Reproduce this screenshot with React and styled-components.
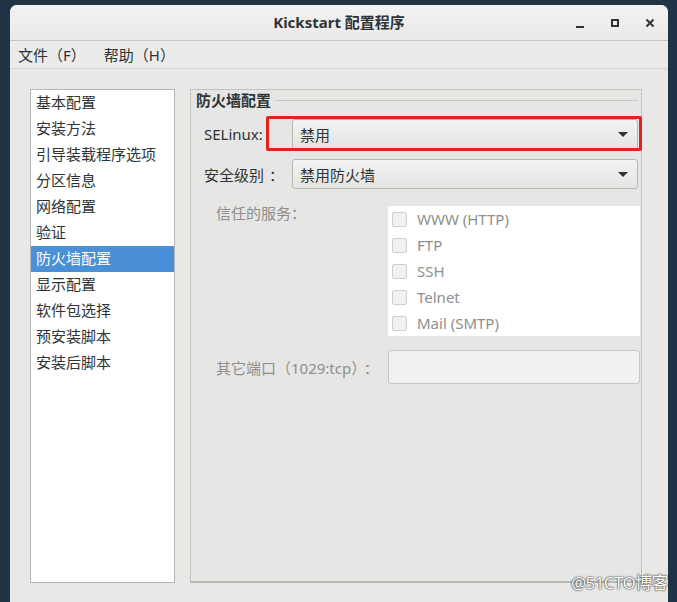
import React from 'react';
import styled, { createGlobalStyle } from 'styled-components';

const Global = createGlobalStyle`
html, body {
  margin: 0;
  padding: 0;
  background: #1f3547;
}
body {
  font-family: "Noto Sans", "Noto Sans CJK SC", sans-serif;
  font-size: 15px;
  color: #2e3436;
}
`

const Desk = styled.div`
width: 677px;
height: 602px;
padding: 5px 9px 0 10px;
box-sizing: border-box;
position: relative;
overflow: hidden;
`

const Window = styled.div`
display: flex;
flex-direction: column;
height: 597px;
background: #e8e8e7;
border-radius: 7px 7px 0 0;
overflow: hidden;
`

const TitleBar = styled.div`
display: grid;
grid-template-columns: 1fr auto 1fr;
align-items: center;
height: 35px;
flex-shrink: 0;
background: linear-gradient(#f3f2f1, #eceae9);
border-bottom: 1px solid #c4c3c1;
`

const Title = styled.div`
font-weight: bold;
font-size: 15px;
color: #2e3436;
margin-top: -3px;
`

const Controls = styled.div`
display: flex;
align-items: center;
justify-content: flex-end;
gap: 13px;
padding-right: 7px;
`

const Ctrl = styled.div`
width: 22px;
height: 22px;
display: flex;
align-items: center;
justify-content: center;
`

const MenuBar = styled.div`
display: flex;
height: 27px;
flex-shrink: 0;
align-items: center;
padding-left: 8px;
gap: 18px;
background: #ebebea;
border-bottom: 1px solid #d6d6d4;
`

const MenuItem = styled.span`
font-size: 15px;
color: #2e3436;
`

const Body = styled.div`
display: flex;
gap: 15px;
padding: 20px 26px 19px 20px;
flex: 1;
`

const Sidebar = styled.div`
width: 143px;
background: #fff;
border: 1px solid #b8b8b6;
`

const NavItem = styled.div`
height: 26px;
line-height: 25px;
padding-left: 5px;
font-size: 15px;
background: ${p => p.active ? '#4a90d9' : 'transparent'};
color: ${p => p.active ? '#fff' : '#2e3436'};
`

const Panel = styled.div`
flex: 1;
border: 1px solid #c2c2bf;
border-bottom: 2px solid #b8b8b4;
background: #e6e6e5;
position: relative;
padding: 0 1px 0 13px;
`

const Legend = styled.div`
display: flex;
align-items: center;
height: 20px;
margin-left: -8px;
margin-right: 2px;
gap: 4px;
`

const LegendText = styled.span`
font-weight: bold;
font-size: 15px;
color: #2e3436;
margin-top: -2px;
`

const LegendLine = styled.div`
flex: 1;
height: 1px;
background: #c8c8c5;
`

const Row = styled.div`
display: flex;
align-items: ${p => p.top ? 'flex-start' : 'center'};
margin-top: ${p => p.gap}px;
padding-left: ${p => p.indent || 0}px;
`

const Label = styled.div`
width: ${p => p.w}px;
flex-shrink: 0;
font-size: 15px;
color: ${p => p.dim ? '#8e8f8d' : '#2e3436'};
line-height: ${p => p.top ? '14px' : 'normal'};
`

const Colon = styled.span`
margin-left: 5px;
`

const Combo = styled.div`
flex: 1;
height: 28px;
margin-right: 2px;
display: flex;
align-items: center;
justify-content: space-between;
padding: 0 9px 0 7px;
border: 1px solid #b6b6b3;
border-radius: 3px;
background: linear-gradient(#f4f4f3, #e3e3e1);
font-size: 15px;
color: #2e3436;
`

const Arrow = styled.div`
width: 0;
height: 0;
border-left: 5px solid transparent;
border-right: 5px solid transparent;
border-top: 5px solid #2e3436;
`

const List = styled.div`
flex: 1;
margin-right: 0;
background: #fff;
`

const Check = styled.div`
display: flex;
align-items: center;
height: 26px;
padding-left: 4px;
gap: 10px;
font-size: 15px;
color: #8e8f8d;
`

const Box = styled.div`
width: 13px;
height: 13px;
border: 1px solid #cfcfcd;
border-radius: 2px;
background: #f1f1f0;
`

const Entry = styled.div`
flex: 1;
height: 32px;
border: 1px solid #c6c6c4;
border-radius: 3px;
background: #f1f1f0;
`

const Highlight = styled.div`
position: absolute;
left: 75px;
top: 26px;
width: 370px;
height: 29px;
border: 3px solid #e0231d;
border-radius: 2px;
`

const Watermark = styled.div`
position: absolute;
right: 9px;
bottom: 8px;
font-size: 17px;
color: #fff;
letter-spacing: -0.6px;
text-shadow: 0 0 2px #333, 0 0 1px #111;
`

const nav = ['基本配置', '安装方法', '引导装载程序选项', '分区信息', '网络配置', '验证',
  '防火墙配置', '显示配置', '软件包选择', '预安装脚本', '安装后脚本']

const services = ['WWW (HTTP)', 'FTP', 'SSH', 'Telnet', 'Mail (SMTP)']

const App = () => {
  return (
    <Desk>
      <Global />
      <Window>
        <TitleBar>
          <div />
          <Title>Kickstart 配置程序</Title>
          <Controls>
            <Ctrl>
              <svg width="12" height="12" viewBox="0 0 12 12"><rect x="2" y="9" width="8" height="2" fill="#2e3436" /></svg>
            </Ctrl>
            <Ctrl>
              <svg width="12" height="12" viewBox="0 0 12 12"><rect x="3" y="3" width="6" height="6" fill="none" stroke="#2e3436" strokeWidth="2" /></svg>
            </Ctrl>
            <Ctrl>
              <svg width="12" height="12" viewBox="0 0 12 12"><path d="M2.5 2.5 L9.5 9.5 M9.5 2.5 L2.5 9.5" stroke="#2e3436" strokeWidth="2" /></svg>
            </Ctrl>
          </Controls>
        </TitleBar>
        <MenuBar>
          <MenuItem>文件（F）</MenuItem>
          <MenuItem>帮助（H）</MenuItem>
        </MenuBar>
        <Body>
          <Sidebar>
            {nav.map(n => <NavItem key={n} active={n === '防火墙配置'}>{n}</NavItem>)}
          </Sidebar>
          <Panel>
            <Legend>
              <LegendText>防火墙配置</LegendText>
              <LegendLine />
            </Legend>
            <Row gap={9}>
              <Label w={88}>SELinux:</Label>
              <Combo>禁用<Arrow /></Combo>
            </Row>
            <Row gap={10}>
              <Label w={88}>安全级别<Colon>：</Colon></Label>
              <Combo>禁用防火墙<Arrow /></Combo>
            </Row>
            <Row gap={17} indent={12} top>
              <Label w={172} dim top>信任的服务：</Label>
              <List>
                {services.map(s => <Check key={s}><Box />{s}</Check>)}
              </List>
            </Row>
            <Row gap={14} indent={12}>
              <Label w={172} dim>其它端口（1029:tcp）<Colon>：</Colon></Label>
              <Entry />
            </Row>
            <Highlight />
          </Panel>
        </Body>
      </Window>
      <Watermark>@51CTO博客</Watermark>
    </Desk>
  )
}

export default App;
